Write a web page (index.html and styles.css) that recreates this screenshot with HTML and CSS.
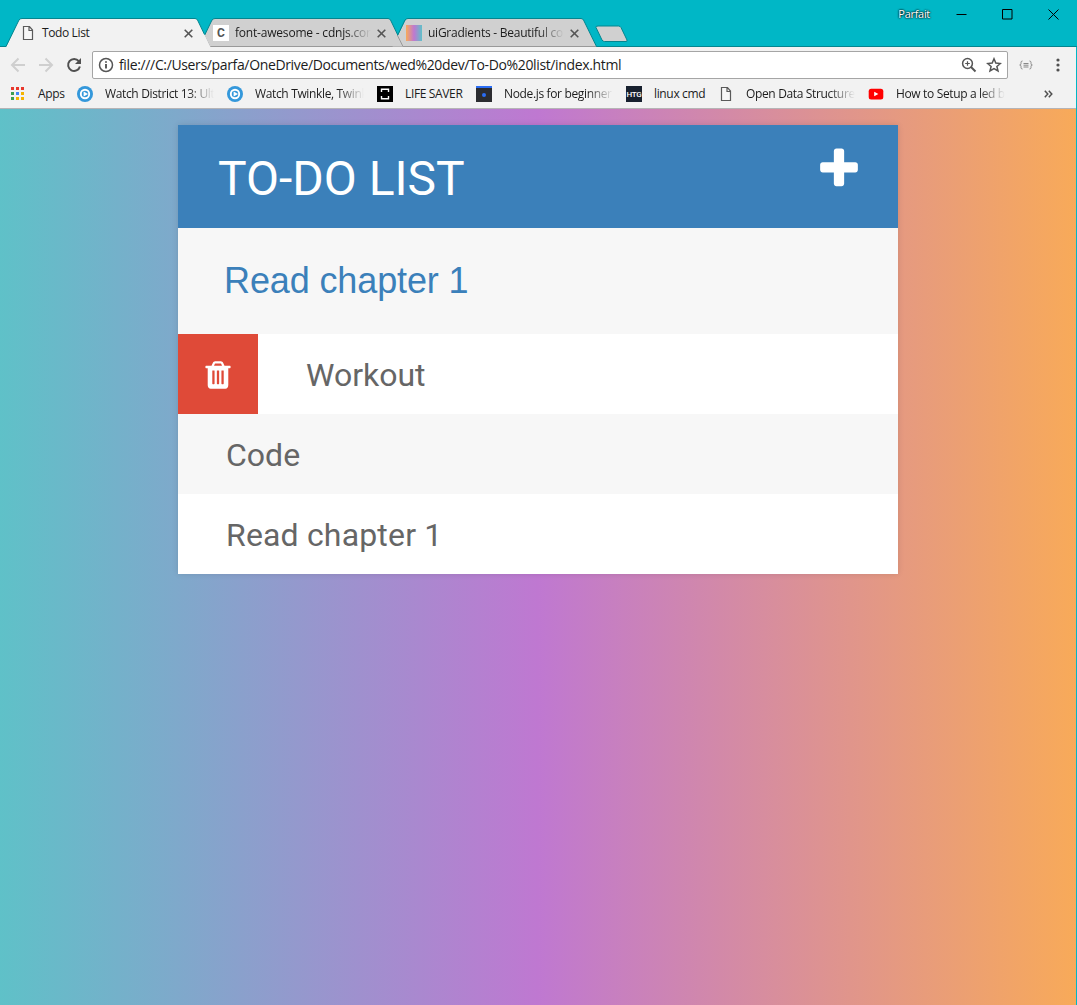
FILE: index.html
```html
<!DOCTYPE html>
<html lang="en">
<head>
<meta charset="utf-8">
<title>Todo List</title>
<link rel="stylesheet" href="styles.css">
</head>
<body>
<div class="window">
  <header class="tabstrip">
    <div class="tab tab-idle tab-third">
      <svg class="tab-shape" width="210" height="29" viewBox="0 0 210 29"><path class="shape-fill" d="M.5 28.5 13.500 2Q14.500 .5 16 .5H189Q190.500 .5 191.500 2L204.500 28.500Z"/><path class="shape-line" d="M5.500 17.500 13 2Q14.500 .5 16 .5H189Q190.500 .5 191.500 2L204.500 28.500"/><path class="shape-shade" d="M5.500 17.500 11 28.500H204"/></svg>
      <span class="favicon favicon-gradient"></span>
      <span class="tab-title fade t-ui">uiGradients - Beautiful co</span>
      <svg class="close" width="9" height="9" viewBox="0 0 9 9"><path d="M.7.7 8.300 8.300M8.300.7.7 8.300"/></svg>
    </div>
    <div class="tab tab-idle tab-second">
      <svg class="tab-shape" width="210" height="29" viewBox="0 0 210 29"><path class="shape-fill" d="M5.500 17.500 13 2Q14.500 .5 16 .5H189Q190.500 .5 191.500 2L199 17.500 204.500 28.500H11Z"/><path class="shape-line" d="M5.500 17.500 13 2Q14.500 .5 16 .5H189Q190.500 .5 191.500 2L199 17.500"/><path class="shape-shade" d="M5.500 17.500 11 28.500H204.500L199 17.500"/></svg>
      <span class="favicon favicon-letter">C</span>
      <span class="tab-title fade t-fa">font-awesome - cdnjs.cor</span>
      <svg class="close" width="9" height="9" viewBox="0 0 9 9"><path d="M.7.7 8.300 8.300M8.300.7.7 8.300"/></svg>
    </div>
    <div class="tab tab-active">
      <svg class="tab-shape" width="210" height="29" viewBox="0 0 210 29"><path class="shape-fill" d="M0 29 13 2Q14 .5 16 .5H189Q190.500 .5 191.500 2L204.500 29Z"/><path class="shape-line" d="M0 28.500 13 2Q14 .5 16 .5H189Q190.500 .5 191.500 2L198.500 16.500"/></svg>
      <svg class="favicon" width="16" height="16" viewBox="0 0 16 16"><path class="page-icon" d="M3.500 1.500H9.500L12.500 5V14.500H3.500ZM9 1.500V5.500H12.500"/></svg>
      <span class="tab-title t-todo">Todo List</span>
      <svg class="close" width="9" height="9" viewBox="0 0 9 9"><path d="M.7.7 8.300 8.300M8.300.7.7 8.300"/></svg>
    </div>
    <svg class="new-tab" width="36" height="18" viewBox="0 0 36 18"><path d="M3 1H23.500Q25 1 26 2.500L32 15Q32.500 16.500 31 16.500H9.500Q8 16.500 7 15L1 2.500Q.5 1 3 1Z"/></svg>
    <div class="controls">
      <span class="profile">Parfait</span>
      <svg width="11" height="11" viewBox="0 0 11 11"><path d="M.5 5.500H10.500"/></svg>
      <svg width="11" height="11" viewBox="0 0 11 11"><path d="M.5.5H10V10H.5Z"/></svg>
      <svg width="11" height="11" viewBox="0 0 11 11"><path d="M.5.5 10.500 10.500M10.500.5.5 10.500"/></svg>
    </div>
  </header>

  <div class="toolbar">
    <svg class="nav nav-off" width="16" height="16" viewBox="0 0 16 16"><path d="M15 8H2.500M8.500 1.500 2 8 8.500 14.500"/></svg>
    <svg class="nav nav-off" width="16" height="16" viewBox="0 0 16 16"><path d="M1 8H13.500M7.500 1.500 14 8 7.500 14.500"/></svg>
    <svg class="nav" width="16" height="16" viewBox="0 0 16 16"><path d="M12.800 4.200A6 6 0 1 0 13.900 9.500"/><path class="solid" d="M15 1V7H9Z"/></svg>
    <div class="omnibox">
      <svg width="16" height="16" viewBox="0 0 16 16"><circle cx="8" cy="8" r="6.500"/><path class="thick" d="M8 7V11.600M8 4.200V5.800"/></svg>
      <span class="url">file:///C:/Users/parfa/OneDrive/Documents/wed%20dev/To-Do%20list/index.html</span>
      <svg width="16" height="16" viewBox="0 0 16 16"><circle cx="6.500" cy="6.500" r="4.900"/><path class="fine" d="M4.200 6.500H8.800M6.500 4.200V8.800"/><path class="thick" d="M10 10 14.500 14.500"/></svg>
      <svg class="star" width="16" height="16" viewBox="0 0 16 16"><path d="M8 1.800 9.800 6.100 14.400 6.500 10.900 9.500 12 14 8 11.600 4 14 5.100 9.500 1.600 6.500 6.200 6.100Z"/></svg>
    </div>
    <svg class="ext" width="14" height="10" viewBox="0 0 14 10"><path d="M3.500 1Q2 1 2 2.500V3.500Q2 5 .7 5 2 5 2 6.500V7.500Q2 9 3.500 9M10.500 1Q12 1 12 2.500V3.500Q12 5 13.300 5 12 5 12 6.500V7.500Q12 9 10.500 9M4.500 3.500H9.500M4.500 5.200H9.500M4.500 7H9.500"/></svg>
    <svg class="menu" width="4" height="14" viewBox="0 0 4 14"><circle cx="2" cy="2" r="1.600"/><circle cx="2" cy="7" r="1.600"/><circle cx="2" cy="12" r="1.600"/></svg>
  </div>

  <nav class="bookmarks">
    <a class="bookmark"><svg width="16" height="16" viewBox="0 0 16 16"><path fill="#e8372c" d="M1 1h3v3H1zM6 1h3v3H6zM11 1h3v3h-3z"/><path fill="#3c9d50" d="M1 6h3v3H1zM1 11h3v3H1z"/><path fill="#4286f5" d="M6 6h3v3H6z"/><path fill="#f5b400" d="M11 6h3v3h-3zM6 11h3v3H6zM11 11h3v3h-3z"/></svg><span class="label w-apps">Apps</span></a>
    <a class="bookmark"><svg width="16" height="16" viewBox="0 0 16 16"><circle cx="8" cy="8" r="8" fill="#3498db"/><circle cx="8" cy="8" r="4.200" fill="#3498db" stroke="#fff" stroke-width="1.900"/><path fill="#fff" d="M6.600 5.500 11 8 6.600 10.500Z"/></svg><span class="label fade">Watch District 13: Ult</span></a>
    <a class="bookmark"><svg width="16" height="16" viewBox="0 0 16 16"><circle cx="8" cy="8" r="8" fill="#3498db"/><circle cx="8" cy="8" r="4.200" fill="#3498db" stroke="#fff" stroke-width="1.900"/><path fill="#fff" d="M6.600 5.500 11 8 6.600 10.500Z"/></svg><span class="label fade">Watch Twinkle, Twink</span></a>
    <a class="bookmark"><svg width="16" height="16" viewBox="0 0 16 16"><path d="M0 0h16v16H0z"/><path fill="none" stroke="#fff" stroke-width="1.400" d="M4.500 6V3.200H11.500V6M4.500 10V12.800H11.500V10"/></svg><span class="label w-life">LIFE SAVER</span></a>
    <a class="bookmark"><svg width="16" height="16" viewBox="0 0 16 16"><path fill="#2b2c30" d="M0 0h16v16H0z"/><path fill="#2a6df5" d="M0 0h16v2H0z"/><circle cx="8" cy="9" r="2" fill="#2a6df5"/></svg><span class="label fade">Node.js for beginner</span></a>
    <a class="bookmark"><span class="htg">HTG</span><span class="label w-linux">linux cmd</span></a>
    <a class="bookmark"><svg width="16" height="16" viewBox="0 0 16 16"><path class="page-icon" d="M3.500 1.500H9.500L12.500 5V14.500H3.500ZM9 1.500V5.500H12.500"/></svg><span class="label fade">Open Data Structure</span></a>
    <a class="bookmark"><svg width="16" height="16" viewBox="0 0 16 16"><rect x=".7" y="2.700" width="14.600" height="10.800" rx="2.500" fill="#f00"/><path fill="#fff" d="M6.200 5.700 10.400 8 6.200 10.300Z"/></svg><span class="label fade">How to Setup a led b</span></a>
    <svg class="more" width="9" height="8" viewBox="0 0 9 8"><path d="M.8.8 3.800 4 .8 7.200M4.800.8 7.800 4 4.800 7.200"/></svg>
  </nav>

  <main class="page">
    <section class="todo">
      <div class="todo-head">
        <h1>TO-DO LIST</h1>
        <svg class="plus" width="48" height="48" viewBox="0 0 1792 1792"><path d="M1600 736v192q0 40-28 68t-68 28h-416v416q0 40-28 68t-68 28h-192q-40 0-68-28t-28-68v-416h-416q-40 0-68-28t-28-68v-192q0-40 28-68t68-28h416v-416q0-40 28-68t68-28h192q40 0 68 28t28 68v416h416q40 0 68 28t28 68z"/></svg>
      </div>
      <div class="todo-input">Read chapter 1</div>
      <ul>
        <li><span class="trash"><svg width="32" height="32" viewBox="0 0 1792 1792"><path d="M704 1376v-704q0-14-9-23t-23-9h-64q-14 0-23 9t-9 23v704q0 14 9 23t23 9h64q14 0 23-9t9-23zm256 0v-704q0-14-9-23t-23-9h-64q-14 0-23 9t-9 23v704q0 14 9 23t23 9h64q14 0 23-9t9-23zm256 0v-704q0-14-9-23t-23-9h-64q-14 0-23 9t-9 23v704q0 14 9 23t23 9h64q14 0 23-9t9-23zm-544-992h448l-48-117q-7-9-17-11h-317q-10 2-17 11zm928 32v64q0 14-9 23t-23 9h-96v948q0 83-47 143.500t-113 60.500h-832q-66 0-113-58.500t-47-141.500v-952h-96q-14 0-23-9t-9-23v-64q0-14 9-23t23-9h309l70-167q15-37 54-63t79-26h320q40 0 79 26t54 63l70 167h309q14 0 23 9t9 23z"/></svg></span><span class="task">Workout</span></li>
        <li><span class="task">Code</span></li>
        <li><span class="task task-long">Read chapter 1</span></li>
      </ul>
    </section>
  </main>
</div>
</body>
</html>
```
FILE: styles.css
```css
* { box-sizing: border-box; }
body { margin: 0; background: #00b7c6; }
svg { display: block; flex: none; }

.window {
  display: flex;
  flex-direction: column;
  width: 1077px;
  height: 1005px;
  padding-right: 1px;
  overflow: hidden;
  font: 12px/16px "Open Sans", "Noto Sans", sans-serif;
  color: #1c1c1c;
}

/* Tab strip */
.tabstrip {
  display: flex;
  height: 47px;
  padding: 18px 0 0 6px;
  border-bottom: 1px solid #04858f;
  margin-right: -1px;
  flex: none;
}
.tab {
  position: relative;
  display: flex;
  align-items: center;
  width: 193px;
  height: 29px;
  padding: 1px 0 0 14px;
  flex: none;
}
.tab-active { order: 1; z-index: 2; }
.tab-second { order: 2; }
.tab-third { order: 3; }
.tab-shape { position: absolute; left: 0; top: 0; }
.shape-fill { fill: #d0d0d0; }
.tab-active .shape-fill { fill: #f2f2f2; }
.shape-line { fill: none; stroke: #04858f; }
.shape-shade { fill: none; stroke: #999; }
.favicon { position: relative; width: 16px; height: 16px; margin-right: 6px; flex: none; }
.favicon-letter { background: #fff; color: #555; font: bold 12px/16px "Roboto", sans-serif; text-align: center; }
.favicon-gradient { background: linear-gradient(to right, #f8aa59, #bf78d1, #5fc1c8); }
.page-icon { fill: #fff; fill-opacity: .4; stroke: #5a5a5a; stroke-width: 1.2; }
.tab-title { position: relative; width: 136px; white-space: nowrap; }
.close { position: relative; margin-left: 6px; fill: none; stroke: #555; stroke-width: 1.6; }
.tab-active .close { margin-left: 5px; }
.fade {
  -webkit-mask-image: linear-gradient(to left, transparent, #000 26px);
  mask-image: linear-gradient(to left, transparent, #000 26px);
}
.t-todo { width: 137px; letter-spacing: -.38px; }
.t-fa { letter-spacing: -.2px; }
.t-ui { letter-spacing: -.25px; }

.new-tab { order: 4; margin: 7px 0 0 10px; fill: #d0d0d0; stroke: #04858f; }
.controls { order: 5; display: flex; gap: 35px; margin: -11px 18px 0 auto; height: 14px; align-items: center; }
.controls svg { fill: none; stroke: #000; }
.profile {
  margin-right: -9px;
  font-size: 11px;
  line-height: 14px;
  letter-spacing: -.3px;
  color: #fff;
  text-shadow: 0 0 2px #000, 0 0 2px #000;
}

/* Address bar */
.toolbar {
  display: flex;
  align-items: center;
  height: 36px;
  padding: 0 16px 0 10px;
  background: #f2f2f2;
  flex: none;
}
.nav { margin-right: 12px; fill: none; stroke: #505050; stroke-width: 2; }
.nav:nth-child(3) { margin-right: 10px; }
.nav-off { stroke: #cfcfcf; }
.solid { fill: #505050; stroke: none; }
.omnibox {
  display: flex;
  align-items: center;
  width: 916px;
  height: 28px;
  padding: 0 5px;
  border: 1px solid #a5a5a5;
  border-radius: 2px;
  background: #fff;
}
.omnibox svg { fill: none; stroke: #555; stroke-width: 1.5; }
.omnibox .thick { stroke-width: 1.9; }
.omnibox .fine { stroke-width: 1.2; }
.omnibox .star { margin-left: 9px; }
.url { flex: 1; margin-left: 5px; font-size: 14px; line-height: 20px; letter-spacing: -.355px; white-space: nowrap; }
.ext { margin-left: 11px; fill: none; stroke: #888; }
.menu { margin-left: auto; fill: #505050; }

/* Bookmarks bar */
.bookmarks {
  display: flex;
  align-items: center;
  gap: 13px;
  height: 26px;
  padding: 0 0 4px 10px;
  border-bottom: 1px solid #b6b4b6;
  background: #f2f2f2;
  flex: none;
}
.bookmark { display: flex; gap: 12px; align-items: center; flex: none; }
.label { width: 109px; white-space: nowrap; letter-spacing: -.35px; }
.w-apps { width: 26px; }
.w-life { width: 58px; }
.w-linux { width: 51px; }
.htg { width: 16px; height: 16px; background: #17202e; color: #fff; font: 500 8px/17px "Roboto", sans-serif; letter-spacing: -.3px; text-align: center; }
.more { margin-left: 26px; fill: none; stroke: #505050; stroke-width: 1.5; }

/* Page */
.page {
  flex: 1;
  padding-top: 16px;
  background: linear-gradient(to left, #f8aa59, #bf78d1, #5fc1c8);
}
.todo {
  width: 720px;
  margin: 0 0 0 178px;
  background: #fff;
  box-shadow: 0 0 6px rgba(0, 0, 0, .12);
  font-family: Roboto, sans-serif;
}
.todo-head {
  display: flex;
  justify-content: space-between;
  height: 103px;
  padding: 20px 35px 0 40px;
  background: #3b80ba;
  color: #fff;
}
h1 { margin: 0; font-size: 48px; font-weight: 400; line-height: 68px; }
.plus { fill: #fff; }
.todo-input {
  height: 106px;
  padding-left: 46px;
  background: #f7f7f7;
  color: #3b80ba;
  font: 36px/106px "Liberation Sans", Arial, sans-serif;
  letter-spacing: -.12px;
}
ul { margin: 0; padding: 0; list-style: none; }
li { display: flex; height: 80px; font-size: 32px; line-height: 82px; color: #666; background: #fff; }
li:nth-child(2n) { background: #f7f7f7; }
.trash { display: flex; align-items: center; justify-content: center; width: 80px; height: 80px; padding-top: 1px; background: #df4a38; fill: #fff; }
.task { padding-left: 48px; }
.task-long { letter-spacing: .17px; }
```
